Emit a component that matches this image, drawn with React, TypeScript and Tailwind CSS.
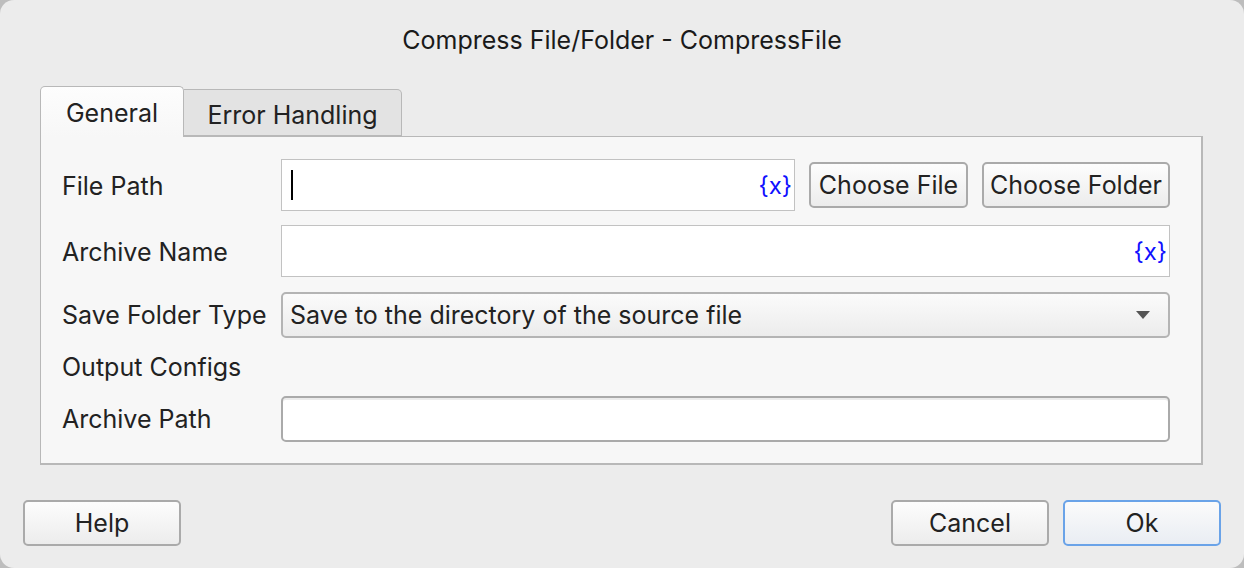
import React from "react";

const font = { fontFamily: "Inter, 'Liberation Sans', sans-serif" };

function Btn({ children, w, primary }: { children: React.ReactNode; w: string; primary?: boolean }) {
  return (
    <div
      className={`${w} h-[46px] flex items-center justify-center rounded-[5px] text-[25px] text-[#222] pt-[2px] ${
        primary
          ? "border-2 border-[#6aa3e8] bg-gradient-to-b from-[#fbfbfb] to-[#e9edf3]"
          : "border-2 border-[#aaaaaa] bg-gradient-to-b from-[#fdfdfd] to-[#ececec]"
      }`}
    >
      {children}
    </div>
  );
}

function VarTag() {
  return <span className="text-[24px] text-[#1010ff] leading-none pt-[2px]">{"{x}"}</span>;
}

export default function App() {
  return (
    <div className="w-[1244px] h-[568px] bg-[#bdbdbd]" style={font}>
      <div className="w-[1244px] h-[568px] bg-[#ececec] rounded-[14px] flex flex-col text-[#222]">
        <div className="h-[26px] mt-[27px] text-center text-[25px] leading-[26px] text-[#1a1a1a]">
          Compress File/Folder - CompressFile
        </div>
        <div className="ml-[40px] mt-[32px] flex items-end h-[51px]">
          <div className="w-[144px] h-[51px] border border-b-0 border-[#b8b8b8] rounded-t-[5px] bg-gradient-to-b from-[#fdfdfd] to-[#f7f7f7] flex items-center justify-center text-[25px] pt-[3px] relative z-10 -mb-[1px]">
            General
          </div>
          <div className="w-[218px] h-[47px] border border-l-0 border-[#b8b8b8] rounded-tr-[5px] bg-[#e3e3e3] flex items-center justify-center text-[25px] pt-[7px]">
            Error Handling
          </div>
        </div>
        <div className="ml-[40px] w-[1163px] h-[329px] border border-r-2 border-b-2 border-[#b8b8b8] bg-[#f7f7f7] pl-[21px] pr-[31px] pt-[22px] flex flex-col text-[25px]">
          <div className="flex items-center h-[52px]">
            <div className="w-[219px] pt-[3px]">File Path</div>
            <div className="w-[514px] h-[52px] border border-[#c2c2c2] bg-white flex items-center justify-between pl-[9px] pr-[2px]">
              <div className="w-[2px] h-[30px] bg-black" />
              <VarTag />
            </div>
            <div className="ml-[14px]">
              <Btn w="w-[159px]">Choose File</Btn>
            </div>
            <div className="ml-[14px]">
              <Btn w="w-[188px]">Choose Folder</Btn>
            </div>
          </div>
          <div className="flex items-center h-[52px] mt-[14px]">
            <div className="w-[219px] pt-[3px]">Archive Name</div>
            <div className="flex-1 h-[52px] border border-[#c2c2c2] bg-white flex items-center justify-end pr-[2px]">
              <VarTag />
            </div>
          </div>
          <div className="flex items-center h-[46px] mt-[15px]">
            <div className="w-[219px] pt-[2px]">Save Folder Type</div>
            <div className="flex-1 h-[46px] border-2 border-[#b4b4b4] rounded-[5px] bg-gradient-to-b from-[#fbfbfb] to-[#ececec] flex items-center justify-between pl-[7px] pr-[18px]">
              <span className="whitespace-nowrap pt-[2px]">Save to the directory of the source file</span>
              <svg width="14" height="10" viewBox="0 0 14 10">
                <polygon points="0,1 14,1 7,9" fill="#555" />
              </svg>
            </div>
          </div>
          <div className="flex items-center h-[30px] mt-[14px]">
            <div className="pt-[2px]">Output Configs</div>
          </div>
          <div className="flex items-center h-[46px] mt-[14px]">
            <div className="w-[219px] pt-[2px]">Archive Path</div>
            <div className="flex-1 h-[46px] border-2 border-[#aaaaaa] rounded-[5px] bg-white shadow-[inset_0_2px_0_#ececec]" />
          </div>
        </div>
        <div className="mt-[35px] px-[23px] flex justify-between">
          <Btn w="w-[158px]">Help</Btn>
          <div className="flex gap-[14px]">
            <Btn w="w-[158px]">Cancel</Btn>
            <Btn w="w-[158px]" primary>
              Ok
            </Btn>
          </div>
        </div>
      </div>
    </div>
  );
}
